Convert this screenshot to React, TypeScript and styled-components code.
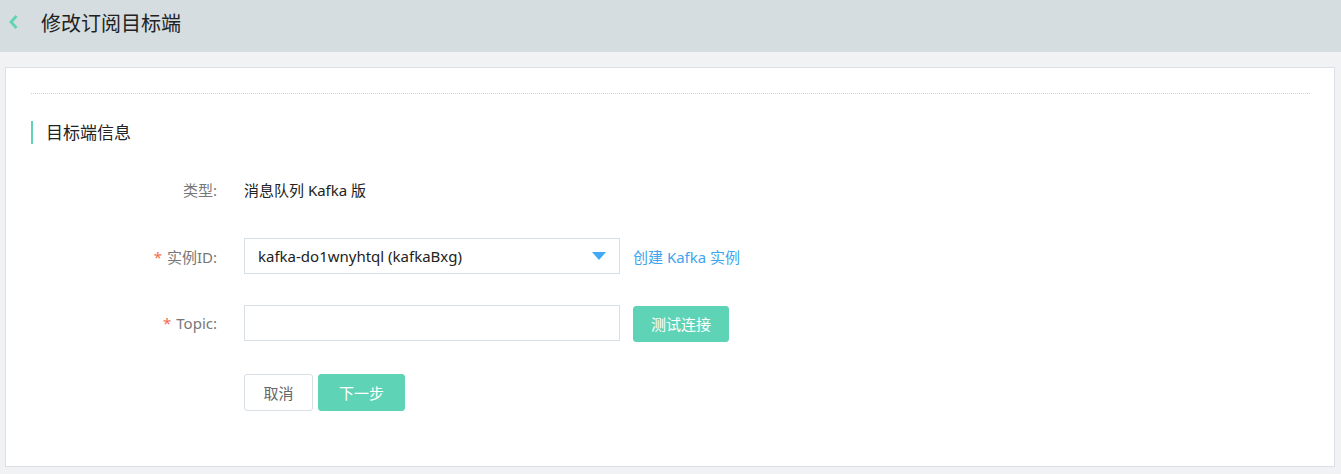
import React from "react";
import styled, { createGlobalStyle } from "styled-components";

const Global = createGlobalStyle`
  html, body { margin: 0; padding: 0; background: #f1f2f3; }
  body { font-family: "Noto Sans", "Noto Sans CJK SC", sans-serif; font-size: 15px; color: #333; }
  * { box-sizing: border-box; }
`;

const Page = styled.div`
  width: 1341px;
  height: 474px;
  background: #f1f2f3;
  display: flex;
  flex-direction: column;
`;

const Header = styled.div`
  height: 52px;
  background: #d5dde0;
  display: flex;
  align-items: center;
  padding-left: 9px;
  padding-bottom: 8px;
`;

const Back = styled.span`
  display: inline-flex;
  width: 32px;
`;

const Title = styled.h1`
  margin: 0;
  font-size: 20px;
  font-weight: 400;
  color: #222;
`;

const Card = styled.div`
  margin: 15px 6px 0 5px;
  height: 400px;
  background: #fff;
  border: 1px solid #dae0e5;
  padding: 25px 24px 0 25px;
`;

const Divider = styled.div`
  border-top: 1px dotted #d0d4d8;
`;

const Section = styled.div`
  margin-top: 27px;
  height: 23px;
  border-left: 2px solid #5fd3b5;
  padding-left: 13px;
  font-size: 17px;
  line-height: 23px;
  color: #222;
`;

const Form = styled.div`
  margin-top: 23px;
  display: flex;
  flex-direction: column;
`;

const Row = styled.div<{ $h: number; $mt: number }>`
  display: flex;
  align-items: center;
  height: ${(p) => p.$h}px;
  margin-top: ${(p) => p.$mt}px;
`;

const Label = styled.div`
  width: 213px;
  text-align: right;
  padding-right: 27px;
  color: #777;
  white-space: nowrap;
`;

const Star = styled.span`
  color: #f06e4b;
  margin-right: 5px;
`;

const Value = styled.div`
  color: #222;
`;

const Select = styled.div`
  width: 376px;
  height: 36px;
  border: 1px solid #d8dfe5;
  display: flex;
  align-items: center;
  justify-content: space-between;
  padding: 0 13px 0 13px;
  color: #222;
`;

const Input = styled.input`
  width: 376px;
  height: 36px;
  border: 1px solid #d8dfe5;
  outline: none;
  padding: 0 12px;
  margin: 0;
  font: inherit;
`;

const Link = styled.a`
  margin-left: 13px;
  color: #3fa3ee;
  text-decoration: none;
`;

const Button = styled.button<{ $primary?: boolean; $w: number }>`
  width: ${(p) => p.$w}px;
  height: 37px;
  border-radius: 3px;
  border: 1px solid ${(p) => (p.$primary ? "#5fd3b5" : "#d8dfe5")};
  background: ${(p) => (p.$primary ? "#5fd3b5" : "#fff")};
  color: ${(p) => (p.$primary ? "#fff" : "#666")};
  font-family: inherit;
  font-size: 15px;
  padding: 0;
  margin-left: ${(p) => (p.$primary ? 5 : 0)}px;
`;

const TestBtn = styled(Button)`
  margin-left: 13px;
  height: 36px;
  margin-top: 2px;
`;

export default function App() {
  return (
    <Page>
      <Global />
      <Header>
        <Back>
          <svg width="10" height="14" viewBox="0 0 10 14">
            <path d="M7.5 1 L2 7 L7.5 13" fill="none" stroke="#5fd3b5" strokeWidth="2.8" />
          </svg>
        </Back>
        <Title>修改订阅目标端</Title>
      </Header>
      <Card>
        <Divider />
        <Section>目标端信息</Section>
        <Form>
          <Row $h={20} $mt={12}>
            <Label>类型:</Label>
            <Value>消息队列 Kafka 版</Value>
          </Row>
          <Row $h={36} $mt={39}>
            <Label>
              <Star>*</Star>实例ID:
            </Label>
            <Select>
              <span>kafka-do1wnyhtql (kafkaBxg)</span>
              <svg width="14" height="8" viewBox="0 0 14 8">
                <path d="M0 0 H14 L7 8 Z" fill="#3fa9f5" />
              </svg>
            </Select>
            <Link href="#">创建 Kafka 实例</Link>
          </Row>
          <Row $h={37} $mt={30}>
            <Label>
              <Star>*</Star>Topic:
            </Label>
            <Input />
            <TestBtn $primary $w={96}>测试连接</TestBtn>
          </Row>
          <Row $h={37} $mt={33}>
            <Label />
            <Button $w={69}>取消</Button>
            <Button $primary $w={87}>下一步</Button>
          </Row>
        </Form>
      </Card>
    </Page>
  );
}
